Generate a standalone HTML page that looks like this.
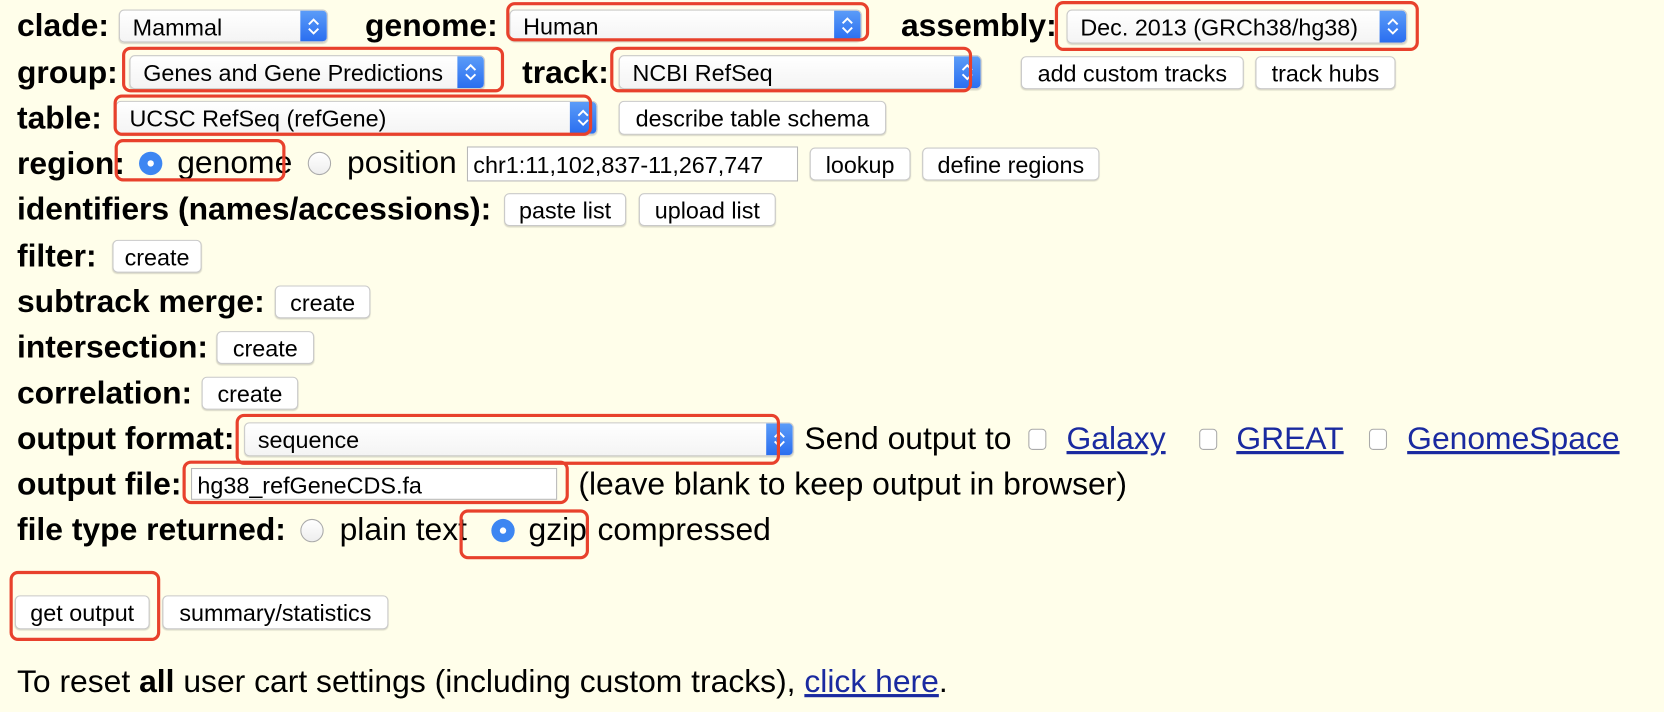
<!DOCTYPE html>
<html><head><meta charset="utf-8">
<style>
html,body{margin:0;padding:0;background:#fffeea;width:1664px;height:712px;overflow:hidden}
#w{position:absolute;left:0;top:0;width:1568px;height:671px;transform:scale(1.06122);transform-origin:0 0;font-family:"Liberation Sans",Arial,sans-serif;color:#000}
.a{position:absolute;white-space:nowrap}
.l{font-weight:bold;font-size:30px;line-height:30px;margin-top:1px}
.t{font-size:30px;line-height:30px;margin-top:1px}
.btn{position:absolute;background:#fff;border:1px solid #c9c9c9;border-radius:5px;box-shadow:0 1px 1px rgba(0,0,0,.15);font-size:22px;line-height:31px;text-align:center;white-space:nowrap;box-sizing:border-box}
.sel{position:absolute;background:linear-gradient(#fff,#f4f4f4);border:1px solid #c9c9c9;border-radius:5px;box-shadow:0 1px 1px rgba(0,0,0,.15);font-size:22px;box-sizing:border-box;overflow:hidden;white-space:nowrap}
.sel span{position:absolute;left:12px;top:50%;transform:translateY(-45%)}
.arr{position:absolute;right:0;top:0;bottom:0;width:25px;background:linear-gradient(#5b9cf8,#2a6ef0);border-radius:0 4px 4px 0}
.arr svg{position:absolute;left:5px;top:50%;margin-top:-9px}
.inp{position:absolute;background:#fff;border:1px solid #b8b8b8;box-sizing:border-box;font-size:22px;padding-left:5px;white-space:nowrap}
.rb{position:absolute;border:3.5px solid #e8412c;border-radius:8px;box-sizing:border-box}
.rad{position:absolute;width:22px;height:22px;border-radius:50%;box-sizing:border-box}
.ru{background:linear-gradient(#fff,#eee);border:1px solid #aaa}
.rc{background:#3d86f2}
.rc:after{content:"";position:absolute;left:8px;top:8px;width:6px;height:6px;border-radius:50%;background:#fff}
.cb{position:absolute;width:17px;height:20px;border:1px solid #aaa;border-radius:4px;background:#fff;box-sizing:border-box}
a{color:#1a2aa0;text-decoration:underline}
</style></head><body><div id="w">

<div class="a l" style="left:16px;top:9px">clade:</div>
<div class="sel" style="left:112px;top:9px;width:197px;height:31px"><span>Mammal</span><div class="arr"><svg width="15" height="18" viewBox="0 0 15 18"><path d="M3 7 L7.5 2.5 L12 7 M3 11 L7.5 15.5 L12 11" stroke="#fff" stroke-width="1.8" fill="none"/></svg></div></div>
<div class="a l" style="left:344px;top:9px">genome:</div>
<div class="sel" style="left:480px;top:9px;width:332px;height:30px"><span>Human</span><div class="arr"><svg width="15" height="18" viewBox="0 0 15 18"><path d="M3 7 L7.5 2.5 L12 7 M3 11 L7.5 15.5 L12 11" stroke="#fff" stroke-width="1.8" fill="none"/></svg></div></div>
<div class="rb" style="left:477px;top:2px;width:342px;height:37px"></div>
<div class="a l" style="left:849px;top:9px">assembly:</div>
<div class="sel" style="left:1005px;top:9px;width:321px;height:32px"><span>Dec. 2013 (GRCh38/hg38)</span><div class="arr"><svg width="15" height="18" viewBox="0 0 15 18"><path d="M3 7 L7.5 2.5 L12 7 M3 11 L7.5 15.5 L12 11" stroke="#fff" stroke-width="1.8" fill="none"/></svg></div></div>
<div class="rb" style="left:994px;top:1px;width:343px;height:47px"></div>

<div class="a l" style="left:16px;top:53px">group:</div>
<div class="sel" style="left:122px;top:52px;width:335px;height:32px"><span>Genes and Gene Predictions</span><div class="arr"><svg width="15" height="18" viewBox="0 0 15 18"><path d="M3 7 L7.5 2.5 L12 7 M3 11 L7.5 15.5 L12 11" stroke="#fff" stroke-width="1.8" fill="none"/></svg></div></div>
<div class="rb" style="left:115px;top:44px;width:360px;height:43px"></div>
<div class="a l" style="left:492px;top:53px">track:</div>
<div class="sel" style="left:583px;top:52px;width:342px;height:32px"><span>NCBI RefSeq</span><div class="arr"><svg width="15" height="18" viewBox="0 0 15 18"><path d="M3 7 L7.5 2.5 L12 7 M3 11 L7.5 15.5 L12 11" stroke="#fff" stroke-width="1.8" fill="none"/></svg></div></div>
<div class="rb" style="left:575px;top:44px;width:341px;height:43px"></div>
<div class="btn" style="left:962px;top:53px;width:210px;height:31px">add custom tracks</div>
<div class="btn" style="left:1183px;top:53px;width:132px;height:31px">track hubs</div>

<div class="a l" style="left:16px;top:96px">table:</div>
<div class="sel" style="left:109px;top:95px;width:454px;height:32px"><span>UCSC RefSeq (refGene)</span><div class="arr"><svg width="15" height="18" viewBox="0 0 15 18"><path d="M3 7 L7.5 2.5 L12 7 M3 11 L7.5 15.5 L12 11" stroke="#fff" stroke-width="1.8" fill="none"/></svg></div></div>
<div class="rb" style="left:107px;top:89px;width:451px;height:39px"></div>
<div class="btn" style="left:583px;top:95px;width:252px;height:32px">describe table schema</div>

<div class="a l" style="left:16px;top:139px">region:</div>
<div class="rad rc" style="left:131px;top:143px"></div>
<div class="a t" style="left:167px;top:138px">genome</div>
<div class="rb" style="left:108px;top:131px;width:161px;height:40px"></div>
<div class="rad ru" style="left:290px;top:143px"></div>
<div class="a t" style="left:327px;top:138px">position</div>
<div class="inp" style="left:440px;top:138px;width:312px;height:33px;line-height:33px">chr1:11,102,837-11,267,747</div>
<div class="btn" style="left:763px;top:139px;width:95px;height:31px">lookup</div>
<div class="btn" style="left:869px;top:139px;width:167px;height:31px">define regions</div>

<div class="a l" style="left:16px;top:182px">identifiers (names/accessions):</div>
<div class="btn" style="left:475px;top:182px;width:115px;height:31px">paste list</div>
<div class="btn" style="left:602px;top:182px;width:129px;height:31px">upload list</div>

<div class="a l" style="left:16px;top:226px">filter:</div>
<div class="btn" style="left:106px;top:226px;width:84px;height:31px">create</div>
<div class="a l" style="left:16px;top:269px">subtrack merge:</div>
<div class="btn" style="left:259px;top:269px;width:90px;height:31px">create</div>
<div class="a l" style="left:16px;top:312px">intersection:</div>
<div class="btn" style="left:204px;top:312px;width:92px;height:31px">create</div>
<div class="a l" style="left:16px;top:355px">correlation:</div>
<div class="btn" style="left:190px;top:355px;width:91px;height:31px">create</div>

<div class="a l" style="left:16px;top:398px">output format:</div>
<div class="sel" style="left:230px;top:398px;width:518px;height:32px"><span>sequence</span><div class="arr"><svg width="15" height="18" viewBox="0 0 15 18"><path d="M3 7 L7.5 2.5 L12 7 M3 11 L7.5 15.5 L12 11" stroke="#fff" stroke-width="1.8" fill="none"/></svg></div></div>
<div class="rb" style="left:222px;top:390px;width:513px;height:48px"></div>
<div class="a t" style="left:758px;top:398px">Send output to</div>
<div class="cb" style="left:969px;top:404px"></div>
<div class="a t" style="left:1005px;top:398px"><a>Galaxy</a></div>
<div class="cb" style="left:1130px;top:404px"></div>
<div class="a t" style="left:1165px;top:398px"><a>GREAT</a></div>
<div class="cb" style="left:1290px;top:404px"></div>
<div class="a t" style="left:1326px;top:398px"><a>GenomeSpace</a></div>

<div class="a l" style="left:16px;top:441px">output file:</div>
<div class="inp" style="left:180px;top:441px;width:345px;height:30px;line-height:31px">hg38_refGeneCDS.fa</div>
<div class="rb" style="left:172px;top:434px;width:364px;height:41px"></div>
<div class="a t" style="left:545px;top:441px">(leave blank to keep output in browser)</div>

<div class="a l" style="left:16px;top:484px">file type returned:</div>
<div class="rad ru" style="left:283px;top:489px"></div>
<div class="a t" style="left:320px;top:484px">plain text</div>
<div class="rad rc" style="left:463px;top:489px"></div>
<div class="a t" style="left:498px;top:484px">gzip</div>
<div class="rb" style="left:433px;top:480px;width:122px;height:47px"></div>
<div class="a t" style="left:563px;top:484px">compressed</div>

<div class="btn" style="left:14px;top:561px;width:127px;height:32px">get output</div>
<div class="rb" style="left:9px;top:538px;width:142px;height:66px"></div>
<div class="btn" style="left:153px;top:561px;width:213px;height:32px">summary/statistics</div>

<div class="a t" style="left:16px;top:627px">To reset <b>all</b> user cart settings (including custom tracks), <a>click here</a>.</div>
</div></body></html>
